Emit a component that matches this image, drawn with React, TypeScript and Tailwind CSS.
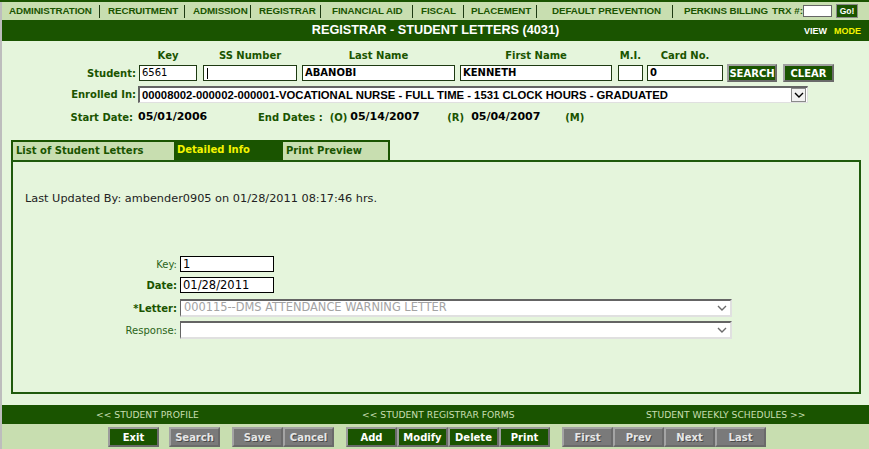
import React from 'react';

const NAV = [
  { label: 'ADMINISTRATION', cell: 'w-[99px] pr-[8px]' },
  { label: 'RECRUITMENT', cell: 'w-[85px] pr-[8px]' },
  { label: 'ADMISSION', cell: 'w-[66px] pr-[8px]' },
  { label: 'REGISTRAR', cell: 'w-[73px] pr-[11px]' },
  { label: 'FINANCIAL AID', cell: 'w-[89px] pr-[8px]' },
  { label: 'FISCAL', cell: 'w-[50px] pr-[7px]' },
  { label: 'PLACEMENT', cell: 'w-[81px] pr-[15px]' },
  { label: 'DEFAULT PREVENTION', cell: 'w-[132px] pr-[11px]' },
];

const arial = "font-['Liberation_Sans',Arial,sans-serif]";

function Chevron({ className = '' }: { className?: string }) {
  return (
    <svg width="10" height="6" viewBox="0 0 10 6" className={className}>
      <path d="M1 1 L5 5 L9 1" fill="none" stroke="currentColor" strokeWidth="1.4" />
    </svg>
  );
}

function TextBox({ value, w, ml, bold = false }: { value: string; w: string; ml: string; bold?: boolean }) {
  return (
    <div
      className={`h-[16px] ${w} ${ml} shrink-0 bg-white border border-[#1e3a12] px-[2px] text-[10px] leading-[14px] text-black whitespace-nowrap ${
        bold ? 'font-bold' : 'font-normal'
      }`}
    >
      {value}
    </div>
  );
}

function FakeSelect({ value, grey = false }: { value: string; grey?: boolean }) {
  return (
    <div className="h-[18px] w-[552px] ml-[3px] bg-white border-t-2 border-l border-t-[#646464] border-l-[#646464] border-b-2 border-r-2 border-b-[#e0e0e0] border-r-[#e0e0e0] flex items-center justify-between pl-[3px] pr-[3px]">
      <span className={`text-[11.4px] whitespace-nowrap ${grey ? 'text-[#a3a3a3]' : 'text-black'}`}>{value}</span>
      <Chevron className="text-[#6b6b6b]" />
    </div>
  );
}

function Btn({ label, on = true }: { label: string; on?: boolean }) {
  return (
    <div
      className={`h-[20px] w-[51px] shrink-0 flex items-center justify-center text-[10px] font-bold border-2 ${
        on
          ? 'bg-[#1a5400] text-white border-t-[#9c9c9c] border-l-[#9c9c9c] border-b-[#6a6a6a] border-r-[#6a6a6a]'
          : 'bg-[#7a7a7a] text-[#e6e6e6] [text-shadow:1px_1px_0_#4a4a4a] border-t-[#a4a4a4] border-l-[#a4a4a4] border-b-[#6a6a6a] border-r-[#6a6a6a]'
      }`}
    >
      {label}
    </div>
  );
}

export default function App() {
  return (
    <div className="w-[869px] h-[449px] overflow-hidden flex flex-col font-['DejaVu_Sans',Verdana,sans-serif]">
      <div className="h-[2px] bg-[#1a5400] shrink-0" />
      <div className="flex-1 flex">
        <div className="w-[2px] bg-[#bdbdbd]" />
        <div className="flex-1 flex flex-col bg-[#e5f5dc]">
          {/* top nav */}
          <div className={`h-[18px] bg-[#c8deb0] flex items-center text-[9.8px] font-bold text-[#1a5400] pl-[7px] ${arial}`}>
            {NAV.map((n) => (
              <div key={n.label} className={`${n.cell} shrink-0 flex items-center justify-between whitespace-nowrap`}>
                <span className="tracking-[-0.1px]">{n.label}</span>
                <div className="w-[1px] h-[13px] bg-[#1e3a12]" />
              </div>
            ))}
            <div className="w-[88px] shrink-0 whitespace-nowrap tracking-[-0.1px]">PERKINS BILLING</div>
            <div className="w-[31px] shrink-0 whitespace-nowrap">TRX #:</div>
            <div className="w-[29px] h-[12px] bg-white border border-[#666]" />
            <div className="ml-[4px] w-[22px] h-[14px] bg-[#1a5400] border border-[#8a8a8a] text-white text-[8.5px] flex items-center justify-center">
              Go!
            </div>
          </div>

          {/* title bar */}
          <div className={`h-[21px] bg-[#1a5400] relative flex items-center justify-center ${arial}`}>
            <span className="text-white font-bold text-[12.7px]">REGISTRAR - STUDENT LETTERS (4031)</span>
            <div className="absolute right-[8px] top-[5px] text-[9px] font-bold">
              <span className="text-white">VIEW</span>
              <span className="ml-[7px] text-[#f4f400]">MODE</span>
            </div>
          </div>

          {/* student header */}
          <div className="pt-[9px] text-[10px] font-bold text-[#1a5400]">
            <div className="flex h-[12px] leading-[12px] whitespace-nowrap">
              <div className="w-[137px] shrink-0" />
              <div className="w-[58px] text-center">Key</div>
              <div className="w-[94px] ml-[6px] text-center">SS Number</div>
              <div className="w-[153px] ml-[5px] text-center">Last Name</div>
              <div className="w-[152px] ml-[5px] text-center">First Name</div>
              <div className="w-[25px] ml-[6px] text-center">M.I.</div>
              <div className="w-[76px] ml-[4px] text-center">Card No.</div>
            </div>
            <div className="flex items-center mt-[2px] h-[18px]">
              <div className="w-[134px] shrink-0 text-right">Student:</div>
              <TextBox value="6561" w="w-[58px]" ml="ml-[3px]" />
              <div className="h-[16px] w-[94px] ml-[6px] shrink-0 bg-white border border-[#1e3a12] flex items-center pl-[3px]">
                <div className="w-[1px] h-[11px] bg-black" />
              </div>
              <TextBox value="ABANOBI" w="w-[153px]" ml="ml-[5px]" bold />
              <TextBox value="KENNETH" w="w-[152px]" ml="ml-[5px]" bold />
              <TextBox value="" w="w-[25px]" ml="ml-[6px]" />
              <TextBox value="0" w="w-[76px]" ml="ml-[4px]" bold />
              <div className="w-[50px] h-[18px] ml-[4px] shrink-0 bg-[#1a5400] text-white text-[10px] font-bold border-2 border-t-[#a0a0a0] border-l-[#a0a0a0] border-b-[#6a6a6a] border-r-[#6a6a6a] flex items-center justify-center">
                SEARCH
              </div>
              <div className="w-[51px] h-[18px] ml-[6px] shrink-0 bg-[#1a5400] text-white text-[10px] font-bold border-2 border-t-[#a0a0a0] border-l-[#a0a0a0] border-b-[#6a6a6a] border-r-[#6a6a6a] flex items-center justify-center">
                CLEAR
              </div>
            </div>
            <div className="flex items-center mt-[4px] h-[17px]">
              <div className="w-[134px] shrink-0 text-right">Enrolled In:</div>
              <div className={`ml-[2px] w-[670px] h-[17px] bg-white border-t-2 border-l-2 border-t-[#646464] border-l-[#646464] border-b border-r border-b-[#e0e0e0] border-r-[#e0e0e0] flex items-center justify-between pl-[2px] pr-[1px] ${arial}`}>
                <span className="text-[11.3px] text-black font-bold whitespace-nowrap">
                  00008002-000002-000001-VOCATIONAL NURSE - FULL TIME - 1531 CLOCK HOURS - GRADUATED
                </span>
                <div className="w-[15px] h-[14px] border border-[#8a8a8a] bg-[#f2f2f2] flex items-center justify-center">
                  <Chevron className="text-black" />
                </div>
              </div>
            </div>
            <div className="flex items-center mt-[7px] h-[14px] whitespace-nowrap">
              <div className="w-[131px] shrink-0 text-right">Start Date:</div>
              <div className="ml-[5px] w-[71px] text-black text-[11px]">05/01/2006</div>
              <div className="ml-[49px]">End Dates :</div>
              <div className="ml-[7px]">(O)</div>
              <div className="ml-[3px] w-[72px] text-black text-[11px]">05/14/2007</div>
              <div className="ml-[25px]">(R)</div>
              <div className="ml-[7px] w-[72px] text-black text-[11px]">05/04/2007</div>
              <div className="ml-[22px]">(M)</div>
            </div>
          </div>

          {/* tabs */}
          <div className="ml-[9px] mt-[16px] flex text-[10px] font-bold h-[20px] whitespace-nowrap">
            <div className="w-[163px] bg-[#c8deb0] border-2 border-[#1a5400] border-b-0 border-r-0 text-[#1a5400] pl-[3px] leading-[18px]">
              List of Student Letters
            </div>
            <div className="w-[109px] bg-[#1a5400] text-[#f4f400] pl-[3px] leading-[20px]">Detailed Info</div>
            <div className="w-[107px] bg-[#c8deb0] border-2 border-[#1a5400] border-b-0 border-l-0 text-[#1a5400] pl-[3px] leading-[18px]">
              Print Preview
            </div>
          </div>
          <div className="ml-[9px] w-[850px] h-[234px] shrink-0 border-2 border-[#1f5a0c] flex flex-col">
            <div className="mt-[30px] ml-[12px] text-[11.3px] leading-[13px] text-[#222] whitespace-nowrap">
              Last Updated By: ambender0905 on 01/28/2011 08:17:46 hrs.
            </div>
            <div className="mt-[51px] flex flex-col text-[10px] whitespace-nowrap">
              <div className="flex items-center h-[16px]">
                <div className="w-[164px] text-right text-[#2a6418]">Key:</div>
                <div className="ml-[3px] w-[94px] h-[16px] bg-white border border-black px-[2px] text-[11.5px] leading-[14px]">1</div>
              </div>
              <div className="flex items-center h-[16px] mt-[5px]">
                <div className="w-[164px] text-right text-[#1a5400] font-bold">Date:</div>
                <div className="ml-[3px] w-[94px] h-[16px] bg-white border border-black px-[2px] text-[11.5px] leading-[14px]">01/28/2011</div>
              </div>
              <div className="flex items-center h-[18px] mt-[6px]">
                <div className="w-[164px] text-right text-[#1a5400] font-bold">*Letter:</div>
                <FakeSelect value="000115--DMS ATTENDANCE WARNING LETTER" grey />
              </div>
              <div className="flex items-center h-[18px] mt-[4px]">
                <div className="w-[164px] text-right text-[#2a6418]">Response:</div>
                <FakeSelect value="" />
              </div>
            </div>
          </div>

          {/* bottom link bar */}
          <div className="mt-[11px] h-[19px] shrink-0 bg-[#1a5400] text-[#c8deb0] text-[9.2px] flex items-center whitespace-nowrap">
            <div className="w-[94px] shrink-0" />
            <span className="w-[266px] shrink-0">&lt;&lt; STUDENT PROFILE</span>
            <span className="w-[284px] shrink-0">&lt;&lt; STUDENT REGISTRAR FORMS</span>
            <span>STUDENT WEEKLY SCHEDULES &gt;&gt;</span>
          </div>
          <div className="flex-1 bg-[#c8deb0] flex items-start pt-[3px] pl-[106px]">
            <Btn label="Exit" />
            <div className="w-[10px] shrink-0" />
            <Btn label="Search" on={false} />
            <div className="w-[12px] shrink-0" />
            <Btn label="Save" on={false} />
            <Btn label="Cancel" on={false} />
            <div className="w-[12px] shrink-0" />
            <Btn label="Add" />
            <Btn label="Modify" />
            <Btn label="Delete" />
            <Btn label="Print" />
            <div className="w-[12px] shrink-0" />
            <Btn label="First" on={false} />
            <Btn label="Prev" on={false} />
            <Btn label="Next" on={false} />
            <Btn label="Last" on={false} />
          </div>
        </div>
      </div>
    </div>
  );
}
